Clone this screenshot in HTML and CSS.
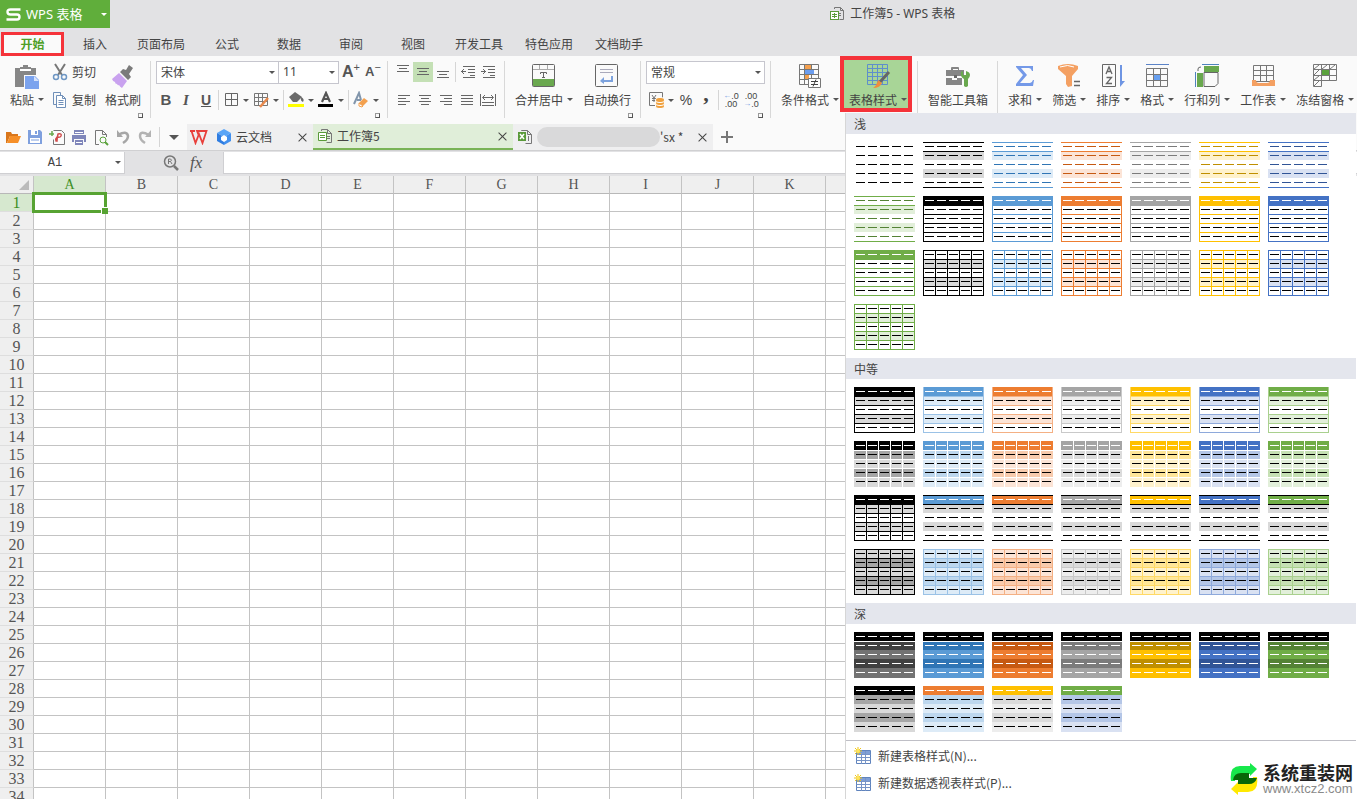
FILE: index.html
```html
<!DOCTYPE html>
<html lang="zh-CN">
<head>
<meta charset="utf-8">
<title>工作簿5 - WPS 表格</title>
<link rel="stylesheet" href="styles.css">
</head>
<body>
<header class="titlebar">
  <button class="brand" type="button">
    <svg width="15" height="13" viewBox="0 0 15 13" fill="none" stroke="#fff" stroke-width="2.4"><path d="M14.500 1.500H4.500Q1.500 1.500 1.500 4T4.500 6.500H11Q13.500 6.500 13.500 9T11 11.500H.5"/></svg>
    <span class="brand-name">WPS 表格</span><span class="brand-arrow"><i class="caret light"></i></span>
  </button>
  <h1 class="doc-title">
    <svg width="16" height="16" viewBox="0 0 16 16" fill="none" stroke="#777"><path d="M5.500 3V1.500h6l3 3v9h-4M11.500 1.500v3h3M9 7.500h3M10 9.500h2"/><rect x="1.500" y="5.500" width="8" height="8" fill="#fff" stroke="#5a9a3a"/><path d="M3 8.500h5M3 10.500h5M5.500 7v5" stroke="#5a9a3a"/></svg>
    <span>工作簿5 - WPS 表格</span>
  </h1>
</header>

<nav class="menu">
  <a href="#" class="current">开始</a><a href="#">插入</a><a href="#">页面布局</a><a href="#">公式</a><a href="#">数据</a><a href="#">审阅</a><a href="#">视图</a><a href="#">开发工具</a><a href="#">特色应用</a><a href="#">文档助手</a>
</nav>

<div class="ribbon">
  <section class="group">
    <button class="big" type="button">
      <svg width="28" height="28" viewBox="0 0 28 28"><path d="M2 5h5V4h3V2h5v2h3v1h5v7H11v12H2z" fill="#868686"/><path d="M7 6h11v2H7z" fill="#fff"/><path d="M12 13h10l4 4v9H12z" fill="#7ba3ee"/><path d="M21 13v5h5" fill="#d5e2fb"/></svg>
      <span class="label">粘贴<i class="caret"></i></span>
    </button>
    <div class="stack">
      <button class="mini" type="button"><svg width="18" height="18" viewBox="0 0 18 18" fill="none" stroke-width="2"><path d="M4 1l7 11M14 1L7 12" stroke="#777"/><circle cx="5" cy="14" r="2.500" stroke="#6f97c4" stroke-width="1.500"/><circle cx="13" cy="14" r="2.500" stroke="#6f97c4" stroke-width="1.500"/></svg>剪切</button>
      <button class="mini" type="button"><svg width="18" height="18" viewBox="0 0 18 18" fill="none" stroke="#6f8fb8"><path d="M5 13.500H2.500v-12h7V4"/><path d="M5.500 4.500h6l3 3v9h-9z" fill="#fff"/><path d="M11.500 4.500v3h3M7.500 9.500h5M7.500 11.500h5M7.500 13.500h5"/></svg>复制</button>
    </div>
    <button class="big" type="button">
      <svg width="28" height="28" viewBox="0 0 28 28"><path d="M20 2l4 3-4 6 2 3-3 3-8-8 3-3 3 1z" fill="#7b7b7b"/><path d="M10 10l8 8-5 7q-2-1-3-3-1 1-2-1-2 0-2-2-2 0-3-3z" fill="#c9a2ef"/></svg>
      <span class="label">格式刷</span>
    </button>
    <i class="launcher"></i>
  </section>

  <section class="group">
    <div class="stack font">
      <div class="line">
        <span class="combo face"><select aria-label="字体"><option>宋体</option></select></span><span class="combo size"><select aria-label="字号"><option>11</option></select></span>
        <button class="tool grow" type="button" aria-label="增大字号"><b class="big-a">A</b><sup>+</sup></button><button class="tool grow" type="button" aria-label="减小字号"><b class="small-a">A</b><sup>−</sup></button>
      </div>
      <div class="line">
        <button class="tool ltr" type="button"><b>B</b></button><button class="tool ltr" type="button"><em>I</em></button><button class="tool ltr" type="button"><u>U</u></button><i class="sep"></i>
        <button class="drop" type="button" aria-label="边框"><svg width="20" height="18" viewBox="0 0 20 18" fill="none" stroke="#666"><path d="M4.500 2.500h12v12h-12zM10.500 2.500v12M4.500 8.500h12"/></svg><i class="caret"></i></button><button class="drop" type="button" aria-label="绘制边框"><svg width="20" height="18" viewBox="0 0 20 18" fill="none" stroke="#777"><path d="M3.500 2.500h13v12h-13zM7.500 2.500v12M11.500 2.500v12M3.500 6.500h13M3.500 10.500h13"/><path d="M9 16l8-9" stroke="#e9894c" stroke-width="2.500"/></svg><i class="caret"></i></button><i class="sep"></i>
        <button class="drop" type="button" aria-label="填充颜色"><svg width="20" height="18" viewBox="0 0 20 18"><path d="M9 1l7 5-5 5H7L3 6z" fill="#6b6b6b"/><path d="M15 6q4 2 2 5-3-1-2-5" fill="#6b6b6b"/><path d="M2 13h16v3H2z" fill="#ff0"/></svg><i class="caret"></i></button><button class="drop" type="button" aria-label="字体颜色"><svg width="20" height="18" viewBox="0 0 20 18"><path d="M6 11l4-9 4 9M7.500 8h5" fill="none" stroke="#555" stroke-width="2.200"/><path d="M2 13h15v3H2z"/></svg><i class="caret"></i></button><i class="sep"></i>
        <button class="drop" type="button" aria-label="清除格式"><svg width="20" height="18" viewBox="0 0 20 18"><path d="M3 13l5-11 2 7M6 9h4" fill="none" stroke="#8195ab" stroke-width="2"/><path d="M8 12l5-5 4 3-6 6-3-1z" fill="#f3a04e"/><path d="M8 12l4 3-1 1-3-1z" fill="#fff" stroke="#f3a04e"/></svg><i class="caret"></i></button>
      </div>
    </div>
    <i class="launcher"></i>
  </section>

  <section class="group">
    <div class="stack align">
      <div class="line">
        <button class="tool" type="button" aria-label="顶端对齐"><svg width="14" height="14" viewBox="0 0 14 14"><path d="M1 .5h12M3 3.500h8M1 6.500h12"/></svg></button><button class="tool on" type="button" aria-label="垂直居中"><svg width="14" height="14" viewBox="0 0 14 14"><path d="M1 3.500h12M3 6.500h8M1 9.500h12"/></svg></button><button class="tool" type="button" aria-label="底端对齐"><svg width="14" height="14" viewBox="0 0 14 14"><path d="M1 6.500h12M3 9.500h8M1 12.500h12"/></svg></button><i class="sep"></i>
        <button class="tool" type="button" aria-label="减少缩进"><svg width="14" height="14" viewBox="0 0 14 14"><path d="M2 1.500h12M7 4.500h7M7 7.500h7M2 12.500h12M9 10.500h5M0 6.500h5M3 4L.5 6.500 3 9"/></svg></button><button class="tool" type="button" aria-label="增加缩进"><svg width="14" height="14" viewBox="0 0 14 14"><path d="M2 1.500h12M7 4.500h7M7 7.500h7M2 12.500h12M9 10.500h5M0 6.500h5M2 4l2.500 2.500L2 9"/></svg></button>
      </div>
      <div class="line wide">
        <button class="tool" type="button" aria-label="左对齐"><svg width="14" height="14" viewBox="0 0 14 14"><path d="M1 2.500h12M1 5.500h8M1 8.500h12M1 11.500h8"/></svg></button><button class="tool" type="button" aria-label="居中"><svg width="14" height="14" viewBox="0 0 14 14"><path d="M1 2.500h12M3 5.500h8M1 8.500h12M3 11.500h8"/></svg></button><button class="tool" type="button" aria-label="右对齐"><svg width="14" height="14" viewBox="0 0 14 14"><path d="M1 2.500h12M5 5.500h8M1 8.500h12M5 11.500h8"/></svg></button><button class="tool" type="button" aria-label="两端对齐"><svg width="14" height="14" viewBox="0 0 14 14"><path d="M1 2.500h12M1 5.500h12M1 8.500h12M1 11.500h12"/></svg></button><button class="tool" type="button" aria-label="分散对齐"><svg width="16" height="14" viewBox="0 0 16 14"><path d="M.5 1v12M15.500 1v12M3 4.500h10M5 2L2.500 4.500 5 7M11 2l2.500 2.500L11 7M2 9.500h12M2 12.500h12"/></svg></button>
      </div>
    </div>
  </section>

  <section class="group">
    <button class="big" type="button"><svg width="28" height="28" viewBox="0 0 28 28" fill="none" stroke="#666"><rect x="2.500" y="1.500" width="22" height="22" rx="1"/><path d="M3 16h21v7H3z" fill="#6aa84f" stroke="none"/><path d="M9.500 2v4M17.500 2v4M3 6.500h21" stroke="#aaa"/><path d="M10.500 11V9.500h6V11M13.500 9.500v5M12 14.500h3"/></svg><span class="label">合并居中<i class="caret"></i></span></button>
    <button class="big" type="button"><svg width="28" height="28" viewBox="0 0 28 28" fill="none" stroke="#666"><rect x="2.500" y="1.500" width="22" height="22" rx="1"/><path d="M7 6.500h13M7 9.500h13" stroke="#aab"/><path d="M19 13v5H9" stroke="#7ca2dd" stroke-width="2"/><path d="M11 14v7l-4-3z" fill="#7ca2dd" stroke="none"/></svg><span class="label">自动换行</span></button>
    <i class="launcher"></i>
  </section>

  <section class="group">
    <div class="stack number">
      <div class="line"><span class="combo format"><select aria-label="数字格式"><option>常规</option></select></span></div>
      <div class="line">
        <button class="drop" type="button" aria-label="会计数字格式"><svg width="20" height="18" viewBox="0 0 20 18" fill="none" stroke="#777"><path d="M9 14.500H3.500v-13h13V7"/><path d="M6 4l2 3 2-3M8 7v4M6 7.500h4M6 9.500h4"/><g fill="#f0a03c" stroke="#fff"><ellipse cx="14" cy="15" rx="4.500" ry="2.500"/><ellipse cx="14" cy="12" rx="4.500" ry="2.500"/><ellipse cx="14" cy="9" rx="4.500" ry="2.500"/></g></svg><i class="caret"></i></button><button class="tool pct" type="button">%</button><button class="tool comma" type="button">,</button><i class="sep"></i><button class="tool dec" type="button" aria-label="增加小数位"><span><b>←</b>.0</span><span>.00</span></button><button class="tool dec" type="button" aria-label="减少小数位"><span>.00</span><span><b>→</b>.0</span></button>
      </div>
    </div>
    <i class="launcher"></i>
  </section>

  <section class="group">
    <button class="big" type="button"><svg width="28" height="28" viewBox="0 0 28 28" fill="none" stroke="#777"><path d="M3.500 1.500h19v20h-19zM8.500 2v20M15.500 2v20M3.500 6.500h19M3.500 11.500h19M3.500 16.500h19"/><path d="M9 2h6v4H9zM9 12h4v4H9z" fill="#f5a04e" stroke="none"/><path d="M9 7h9v4H9z" fill="#6b9df0" stroke="none"/><path d="M12.500 15.500h12v9h-12z" fill="#fff"/><path d="M15 18.500h7M15 21.500h7M20 16.500l-3 7" stroke="#444"/></svg><span class="label">条件格式<i class="caret"></i></span></button>
    <button class="big open" type="button" aria-expanded="true"><svg width="28" height="28" viewBox="0 0 28 28" fill="none" stroke="#5e8fcb"><path d="M3.500 1.500h20v20h-20z"/><path d="M8.500 2v20M13.500 2v20M18.500 2v20M3.500 5.500h20M3.500 9.500h20M3.500 13.500h20M3.500 17.500h20"/><path d="M25 9l-9 10" stroke="#666" stroke-width="3"/><path d="M14 17l4 3q-2 5-9 5 4-3 5-8" fill="#f08c3c" stroke="none"/></svg><span class="label">表格样式<i class="caret"></i></span></button>
  </section>

  <section class="group">
    <button class="big" type="button"><svg width="28" height="28" viewBox="0 0 28 28"><path d="M2 7h5V5q0-1 1-1h6q1 0 1 1v2h5v6H2zM9 7h5V6H9zM2 15h6v2h5v-2h5v7H2z" fill="#858585"/><path d="M10 12h3v3h-3z" fill="#666"/><path d="M17 9l2-1v4h3V8q4 1 4 4 0 2-2 4v7q-2 2-4 0v-7q-4-2-3-7" fill="#69a84e"/></svg><span class="label">智能工具箱</span></button>
  </section>

  <section class="group last">
    <button class="big" type="button"><svg width="28" height="28" viewBox="0 0 28 28"><path d="M5 3h17v5h-1q-1-3-3-3H10l6 7-7 8h10q2 0 3-3h1l-1 6H5v-2l7-9-7-8z" fill="#7499e8"/></svg><span class="label">求和<i class="caret"></i></span></button>
    <button class="big" type="button"><svg width="28" height="28" viewBox="0 0 28 28"><path d="M3 3q10-4 20 0v3l-6 7v10l-4 1-2-3v-8L3 6z" fill="#f4a062"/><path d="M5 4q8-3 14 0" stroke="#fff" fill="none"/><path d="M19 18.500h6M19 22.500h6" stroke="#666" stroke-width="1.500"/></svg><span class="label">筛选<i class="caret"></i></span></button>
    <button class="big" type="button"><svg width="28" height="28" viewBox="0 0 28 28" fill="none" stroke="#666"><path d="M3.500 1.500h13v22h-13z"/><path d="M7 11l3-7 3 7M8 8.500h4M7.500 14.500h5l-5 6h5.500" stroke-width="1.300"/><path d="M22 2v19" stroke="#6e95e3" stroke-width="2"/><path d="M21 24v-6h5z" fill="#6e95e3" stroke="none"/></svg><span class="label">排序<i class="caret"></i></span></button>
    <button class="big" type="button"><svg width="28" height="28" viewBox="0 0 28 28" fill="none" stroke="#777"><path d="M3 1.500h23" stroke="#5b83c7"/><path d="M3.500 5.500h21v18h-21zM10.500 6v18M17.500 6v18M3.500 11.500h21M3.500 17.500h21"/><path d="M11 12h6v5h-6z" fill="#68a0f0" stroke="none"/></svg><span class="label">格式<i class="caret"></i></span></button>
    <button class="big" type="button"><svg width="28" height="28" viewBox="0 0 28 28" fill="none" stroke="#666"><path d="M11 9.500h14v11l-3 3H11zM5 8V6q0-2 3-2"/><path d="M11 3h15v6H11zM4 10h6v14H4z" fill="#69a84e" stroke="none"/><path d="M9 1.500h17M2.500 9v15" stroke="#4f83bd"/></svg><span class="label">行和列<i class="caret"></i></span></button>
    <button class="big" type="button"><svg width="28" height="28" viewBox="0 0 28 28" fill="none" stroke="#777"><path d="M4.500 2.500h20v16h-20zM11.500 3v16M17.500 3v16M4.500 7.500h20M4.500 12.500h20"/><path d="M3 17h4q0 3 3 3h8q3 0 3-3h5v6H3z" fill="#f4a062" stroke="none"/></svg><span class="label">工作表<i class="caret"></i></span></button>
    <button class="big" type="button"><svg width="28" height="28" viewBox="0 0 28 28" fill="none" stroke="#777"><path d="M2.500 1.500h23v16h-15v6h-8zM10.500 2v16M18.500 2v16M2.500 6.500h23M2.500 12.500h23M2.500 17.500h8M3 6l5-4M11 6l5-4M19 6l5-4M3 12l5-5M3 17l5-4M3 23l5-5"/><path d="M11 7h7v5h-7z" fill="#5ba23d" stroke="none"/></svg><span class="label">冻结窗格<i class="caret"></i></span></button>
  </section>
</div>

<div class="docbar">
  <div class="quick">
    <button type="button" aria-label="打开"><svg width="18" height="18" viewBox="0 0 18 18"><path d="M2 4h5l1 2h6v2H6l-3 7H2z" fill="#d9761b"/><path d="M6 8h11l-3 7H3z" fill="#f68f28"/></svg></button>
    <button type="button" aria-label="保存"><svg width="18" height="18" viewBox="0 0 18 18"><path d="M2 2h12l2 2v12H2z" fill="#7fa0de"/><path d="M5 2h7v5H5zM4 10h10v5H4z" fill="#fff"/><path d="M9 3h2v3H9zM5 11.500h8v1H5z" fill="#7fa0de"/></svg></button>
    <button type="button" aria-label="输出为PDF"><svg width="18" height="18" viewBox="0 0 18 18" fill="none" stroke="#777"><path d="M5.500 2.500h8l3 3v11h-11v-5"/><path d="M1 6h5M4 3v5" stroke="#68a84e" stroke-width="1.500"/><path d="M9 13q0-3 1-7 4-1 3 2-1 2-4 1-2 2-1 4z" stroke="#d14a4a" stroke-width="1.500"/></svg></button>
    <button type="button" aria-label="打印"><svg width="18" height="18" viewBox="0 0 18 18"><path d="M4 2h10v4H4zM2 7h14v7h-2v-3H4v3H2zM5 12h8v5H5z" fill="#7f86ba"/><path d="M5 4h8v1H5zM6 14h6v1H6z" fill="#fff"/></svg></button>
    <button type="button" aria-label="打印预览"><svg width="18" height="18" viewBox="0 0 18 18" fill="none" stroke="#777"><path d="M7 16.500H3.500v-14h7l4 4V9M10.500 2.500v4h4"/><circle cx="11" cy="12" r="3" stroke="#5ba23d"/><path d="M13 14l3 3" stroke="#5ba23d" stroke-width="2"/></svg></button>
    <button type="button" aria-label="撤销"><svg width="18" height="18" viewBox="0 0 18 18" fill="none" stroke="#a6a6a6" stroke-width="2.500"><path d="M4 7q9-5 10 1 0 4-5 7"/><path d="M3 2v7h6z" fill="#a6a6a6" stroke="none"/></svg></button>
    <button type="button" aria-label="恢复"><svg width="18" height="18" viewBox="0 0 18 18" fill="none" stroke="#b3b3b3" stroke-width="2.500"><path d="M13 7Q4 2 4 8q0 4 5 7"/><path d="M15 2v7H9z" fill="#b3b3b3" stroke="none"/></svg></button>
    <i class="sep"></i>
    <button type="button" aria-label="自定义"><i class="caret large"></i></button>
  </div>
  <div class="tab home">
    <svg width="18" height="16" viewBox="0 0 18 16" fill="none" stroke="#e8403c" stroke-width="1.800"><path d="M0 2h5M1.500 2l4 12L9 5l3.500 9 4-12H7l2 5"/></svg>
    <svg width="16" height="16" viewBox="0 0 16 16"><path d="M8 0l7 4-7 4-7-4z" fill="#5aa5f7"/><path d="M1 4l7 4v8l-7-4z" fill="#2f7de1"/><path d="M15 4L8 8v8l7-4z" fill="#4290ee"/><path d="M8 6l3 2v3l-3 2-3-2V8z" fill="#fff"/></svg>
    <a href="#">云文档</a><button class="close" type="button" aria-label="关闭"></button>
  </div>
  <div class="tab active">
    <svg width="16" height="16" viewBox="0 0 16 16" fill="none" stroke="#777"><path d="M4.500 3V1.500h6l4 4v9h-5M10.500 1.500v4h4M10 8.500h3M10 10.500h3"/><path d="M1.500 4.500h8v8h-8z" fill="#fff" stroke="#5a9a3a"/><path d="M3 7.500h5M3 9.500h5" stroke="#5a9a3a"/></svg>
    <a href="#">工作簿5</a><button class="close" type="button" aria-label="关闭"></button>
  </div>
  <div class="tab">
    <svg width="16" height="16" viewBox="0 0 16 16" fill="none" stroke="#777"><path d="M4.500 2V1.500h6l4 4v9h-6M10.500 1.500v4h4M11.500 7v5"/><path d="M1 3h8v9H1z" fill="#5a9a3a" stroke="none"/><path d="M3 5l4 5M7 5l-4 5" stroke="#fff" stroke-width="1.500"/></svg>
    <span class="masked"></span><a href="#">'sx *</a><button class="close" type="button" aria-label="关闭"></button>
  </div>
  <button class="new-tab" type="button" aria-label="新建"></button>
</div>

<div class="formula">
  <label class="namebox"><input type="text" value="A1" aria-label="名称框"><i class="caret"></i></label>
  <div class="fx"><svg width="18" height="18" viewBox="0 0 18 18" fill="none" stroke="#777" stroke-width="1.500"><circle cx="8" cy="7.500" r="5.500"/><path d="M12 12l4 4" stroke-width="2.500"/><path d="M6.500 10V5h2q2 1 0 2.500h-2M8.500 7.500L10 10" stroke-width="1"/></svg><button type="button">fx</button></div>
  <input class="expr" type="text" aria-label="编辑栏">
</div>

<main class="workspace"><table class="sheet" id="sheet"></table></main>

<aside class="gallery">
  <h2>浅</h2><div class="thumbs" id="light"></div>
  <h2>中等</h2><div class="thumbs" id="medium"></div>
  <h2>深</h2><div class="thumbs" id="dark"></div>
  <div class="actions">
    <button type="button"><svg width="18" height="18" viewBox="0 0 18 18"><use href="#new-table"/></svg>新建表格样式(N)...</button>
    <button type="button"><svg width="18" height="18" viewBox="0 0 18 18"><g id="new-table"><path d="M2.500 3.500h14v13h-14z" fill="#fff" stroke="#5f83bd"/><path d="M3 4h13v3H3z" fill="#7f9fd6"/><path d="M2.500 7.500h14M2.500 10.500h14M2.500 13.500h14M7.500 7v10M11.500 4v13" stroke="#7794c6"/><path d="M4 0v8M0 4h8M1 1l6 6M7 1L1 7" stroke="#efc51d"/><circle cx="4" cy="4" r="2" fill="#ffe55a"/></g></svg>新建数据透视表样式(P)...</button>
  </div>
</aside>

<div class="credit">
  <svg width="28" height="32" viewBox="0 0 28 32"><path d="M1 18Q-1 3 10 3h10V0l7 6-7 7v-2H11q-6 0-6 7z" fill="#18e84c"/><path d="M27 14q2 15-9 15H8v3l-7-6 7-7v2h9q6 0 6-7z" fill="#ffe900"/><path d="M3 17q1-7 8-7h8v5h8q-2 6-8 6H8v-4z" fill="#086808"/></svg>
  <p><strong>系统重装网</strong><span>www.xtcz2.com</span></p>
</div>
<script src="app.js"></script>
</body>
</html>
```
FILE: styles.css
```css
* { box-sizing: border-box; }
body {
  margin: 0; height: 100vh; overflow: hidden; position: relative;
  display: flex; flex-direction: column;
  background: #fff; color: #444;
  font: 12px/18px "Noto Sans CJK SC", sans-serif;
}
button, input, select { font: inherit; color: inherit; border: 0; padding: 0; margin: 0; background: none; }
a { color: inherit; text-decoration: none; }
svg { flex: none; display: block; }
h1, h2, p { margin: 0; font-size: 12px; font-weight: 400; }

.caret { display: inline-block; flex: none; border: 3px solid transparent; border-top-color: #555; border-bottom: 0; }
.caret.light { border-top-color: #fff; }
.caret.large { border-width: 5px 5px 0; }
.sep { width: 1px; height: 20px; background: #d5d5d5; margin: 0 2px; flex: none; }

.titlebar { display: flex; flex: none; height: 28px; background: #e2e2e4; font-family: "Noto Sans", "Noto Sans CJK SC", sans-serif; }
.brand { display: flex; align-items: center; width: 110px; height: 28px; padding-left: 6px; gap: 5px; background: #60ae3b; color: #fff; }
.brand-name { flex: 1; text-align: left; font-size: 13px; white-space: nowrap; }
.brand-arrow { width: 13px; display: flex; justify-content: center; }
.doc-title { display: flex; align-items: center; gap: 5px; margin-left: 53%; color: #444; }

.menu { display: flex; flex: none; height: 28px; background: #e2e2e4; padding-left: 1px; }
.menu a { min-width: 62px; padding: 7px 11px 0; text-align: center; }
.menu .current { min-width: 63px; border: 3px solid #f5333a; margin: 4px 0 0; padding-top: 0; height: 24px; color: #4f9f27; font-weight: 700; background: #fafafa; }

.ribbon { display: flex; flex: none; height: 68px; background: #fafafa; overflow: hidden; }
.group { position: relative; display: flex; flex: none; align-items: flex-start; padding: 4px 5px 0; }
.group::after { content: ""; position: absolute; right: 0; top: 5px; bottom: 6px; width: 1px; background: #d8d8d8; }
.group.last::after { display: none; }
.big { display: flex; flex-direction: column; align-items: center; padding: 3px 5px 0; height: 48px; }
.label { display: flex; align-items: center; line-height: 17px; white-space: nowrap; }
.label .caret { margin-left: 4px; }
.big.open { position: relative; background: #a8d597; margin-right: 1px; }
.big.open::after { content: ""; position: absolute; inset: -4px 0 -4px -4px; border: 4px solid #f5333a; }
.stack { display: flex; flex-direction: column; gap: 6px; padding-top: 1px; }
.mini { display: flex; align-items: center; gap: 3px; width: 51px; height: 22px; padding-left: 2px; }
.line { display: flex; align-items: center; height: 22px; }
.font { width: 227px; }
.align { width: 107px; }
.number { width: 120px; }
.launcher { position: absolute; right: 8px; bottom: 6px; width: 5px; height: 5px; border: 1px solid #999; border-right-color: #555; border-bottom-color: #555; }

.combo { position: relative; display: block; height: 23px; }
.combo::after { content: ""; position: absolute; right: 4px; top: 10px; border: 3px solid transparent; border-top-color: #555; border-bottom: 0; }
.combo select { appearance: none; width: 100%; height: 23px; padding-left: 4px; border: 1px solid #c6c6ce; background: #fff; border-radius: 0; }
.face { width: 123px; }
.size { width: 60px; }
.size select { border-left: 0; font-family: "Noto Sans", sans-serif; }
.format { width: 119px; }

.tool { display: flex; align-items: center; justify-content: center; width: 20px; height: 20px; flex: none; }
.tool svg { fill: none; stroke: #666; }
.wide .tool { width: 21px; }
.tool.on { background: #c4e0b5; }
.grow { position: relative; margin-left: 2px; color: #555; font-family: "Liberation Sans", sans-serif; }
.grow sup { align-self: flex-start; font-size: 11px; line-height: 10px; }
.big-a { font-size: 16px; }
.small-a { font-size: 13px; }
.ltr { font: 15px/20px "Liberation Sans", sans-serif; color: #555; }
.ltr em { font-family: "Liberation Serif", serif; font-weight: 700; }
.ltr u { font-weight: 700; font-size: 14px; }
.drop { display: flex; align-items: center; width: 30px; height: 20px; gap: 2px; flex: none; }
.pct { font: 14px/20px "Liberation Sans", sans-serif; }
.comma { font: bold 22px/8px "Liberation Serif", serif; align-items: flex-start; }
.dec { flex-direction: column; font: 9px/8px "Liberation Sans", sans-serif; }
.dec span { display: flex; }
.dec b { color: #6f97e0; font-size: 8px; font-weight: 400; }

.docbar { display: flex; flex: none; height: 27px; background: #fafafa; border-bottom: 1px solid #d0d0d2; }
.quick { display: flex; align-items: center; width: 187px; padding-left: 2px; }
.quick button { width: 22px; display: flex; justify-content: center; }
.quick .sep { margin: 0 3px; }
.tab { display: flex; align-items: center; width: 200px; gap: 4px; padding: 0 6px 0 4px; background: #efeff0; }
.tab.home { width: 126px; gap: 8px; padding-left: 3px; }
.tab.home a { margin-left: -4px; }
.tab.active { background: #e0eed9; border-bottom: 2px solid #79b356; }
.close, .new-tab { position: relative; width: 9px; height: 9px; margin-left: auto; flex: none; }
.close::before, .close::after, .new-tab::before, .new-tab::after { content: ""; position: absolute; left: -1px; top: 4px; width: 11px; height: 1px; background: #444; transform: rotate(45deg); }
.close::after { transform: rotate(-45deg); }
.new-tab { width: 12px; height: 12px; margin: 7px 0 0 8px; }
.new-tab::before, .new-tab::after { left: 0; top: 5px; width: 12px; height: 2px; background: #777; transform: none; }
.new-tab::after { transform: rotate(90deg); }
.masked { width: 123px; height: 20px; border-radius: 10px; background: #d9d9da; }
.masked + a { margin-left: -4px; white-space: nowrap; }

.formula { display: flex; flex: none; height: 25px; padding: 1px 0 2px; background: #e2e2e4; }
.namebox { position: relative; display: block; width: 125px; background: #fff; border: solid #cfcfd2; border-width: 0 1px 1px 0; }
.namebox input { width: 110px; height: 21px; text-align: center; font: 12px/21px "Liberation Mono", monospace; }
.namebox .caret { position: absolute; right: 3px; top: 9px; }
.fx { display: flex; align-items: center; width: 98px; gap: 10px; padding-left: 37px; }
.fx button { font: italic 17px/18px "Liberation Serif", serif; color: #555; }
.expr { flex: 1; background: #fff; border: solid #cfcfd2; border-width: 0 0 1px 1px; }

.workspace { flex: 1; overflow: hidden; min-height: 0; }
.sheet { table-layout: fixed; border-collapse: separate; border-spacing: 0; width: max-content; }
.sheet .row-col { width: 34px; }
.sheet .data-col { width: 72px; }
.sheet th, .sheet td { height: 18px; padding: 0; border: solid #c3c3c3; border-width: 0 1px 1px 0; }
.sheet th { background: #efefef; font: 14px/17px "Liberation Serif", serif; color: #555; }
.sheet tbody th { font-size: 16px; border-bottom-color: #dedede; }
.sheet thead th { border-bottom-color: #b8b8b8; }
.sheet .hot { background: #d6e8cf; color: #3d8f1f; }
.corner { position: relative; }
.corner::after { content: ""; position: absolute; right: 4px; bottom: 3px; border: 5px solid #bbb; border-top-color: transparent; border-left-color: transparent; }
.sheet .cursor { position: relative; }
.cursor::before { content: ""; position: absolute; inset: -2px; border: 3px solid #57a332; }
.cursor::after { content: ""; position: absolute; right: -3px; bottom: -3px; width: 6px; height: 6px; background: #57a332; border: solid #fff; border-width: 1px 0 0 1px; }

.gallery { position: absolute; top: 113px; right: 1px; bottom: 0; width: 511px; background: #fff; border-left: 1px solid #d6d6d6; overflow: hidden; }
.gallery h2 { height: 21px; line-height: 21px; padding-left: 8px; background: #e4e6ed; color: #444; }
.thumbs { display: grid; grid-template-columns: repeat(7, 61px); gap: 8px; padding: 8px; }
.thumbs button { height: 46px; }
.actions { border-top: 1px solid #bfbfc6; padding-top: 1px; }
.actions button { display: flex; align-items: center; gap: 6px; width: max-content; height: 27px; padding-left: 8px; text-align: left; }

.credit { position: absolute; right: 4px; bottom: 4px; display: flex; align-items: center; gap: 5px; }
.credit p { display: flex; flex-direction: column; }
.credit strong { font-size: 18px; line-height: 20px; font-weight: 700; color: #222; }
.credit span { font: 13px/13px "Liberation Sans", sans-serif; color: #8a8a8a; }
```
FILE: app.js
```javascript
const palette = {
  black:  { main: '#000000', light: '#d9d9d9', mid: '#a6a6a6', line: '#000000', dark: '#000000' },
  blue:   { main: '#5b9bd5', light: '#ddebf7', mid: '#bdd7ee', line: '#9bc2e6', dark: '#2f75b5' },
  orange: { main: '#ed7d31', light: '#fce4d6', mid: '#f8cbad', line: '#f4b084', dark: '#c65911' },
  gray:   { main: '#a5a5a5', light: '#ededed', mid: '#dbdbdb', line: '#c9c9c9', dark: '#7b7b7b' },
  gold:   { main: '#ffc000', light: '#fff2cc', mid: '#ffe699', line: '#ffd966', dark: '#bf8f00' },
  navy:   { main: '#4472c4', light: '#d9e1f2', mid: '#b4c6e7', line: '#8ea9db', dark: '#305496' },
  green:  { main: '#70ad47', light: '#e2efda', mid: '#c6e0b4', line: '#a9d08e', dark: '#548235' }
};
const ALL = [0, 9, 18, 27, 36, 45];
const rect = (x, y, w, h, fill) => `<rect x="${x}" y="${y}" width="${w}" height="${h}" fill="${fill}"/>`;

function drawThumb(s) {
  let out = '';
  s.rows.forEach((fill, i) => { if (fill) out += rect(0, i * 9, 61, i === 4 ? 10 : 9, fill); });
  (s.h || []).forEach(y => { out += rect(0, y, 61, 1, s.color); });
  (s.v || []).forEach(x => { out += rect(x, 0, 1, 46, s.color); });
  for (let r = 0; r < 5; r++) {
    for (let c = 0; c < 5; c++) {
      out += rect(2 + c * 12, r * 9 + 4, 9, 1, r === 0 && s.head ? s.head : s.dash || '#000');
    }
  }
  return `<button type="button"><svg width="61" height="46" viewBox="0 0 61 46" shape-rendering="crispEdges">${out}</svg></button>`;
}

const styles = {
  plain: () => ({ rows: ['', '', '', '', ''] }),
  ruled: p => ({ rows: ['', p.light, '', p.light, ''], h: [0, 9, 45], color: p.main, dash: p.dark }),
  boxed: p => ({ rows: [p.main, '', '', '', ''], h: ALL, v: [0, 60], color: p.main, head: '#fff' }),
  grid: p => ({ rows: ['', p.light, '', p.light, ''], h: ALL, v: [0, 12, 24, 36, 48, 60], color: p.main }),
  banded: p => ({ rows: [p.main, p.light, '', p.light, ''], h: [9, 18, 27, 36, 45], v: [0, 60], color: p.line, head: '#fff' }),
  tiles: p => ({ rows: [p.main, p.mid, p.light, p.mid, p.light], h: [9, 18, 27, 36], v: [12, 24, 36, 48], color: '#fff', head: '#fff' }),
  formal: p => p === palette.black
    ? { rows: ['#000', p.light, '', p.light, ''], h: ALL, v: [0, 12, 24, 36, 48, 60], color: '#000', head: '#fff' }
    : { rows: [p.main, '#d9d9d9', '', '#d9d9d9', ''], h: [0, 9, 45], color: '#000', head: '#fff' },
  shaded: p => ({ rows: [p.light, p.mid, p.light, p.mid, p.light], h: ALL, v: [0, 12, 24, 36, 48, 60], color: p.line }),
  deep: p => {
    const dark = p === palette.black ? '#404040' : p.dark;
    const main = p === palette.black ? '#737373' : p.main;
    return { rows: ['#000', dark, main, dark, main], h: [9], color: '#fff', head: '#fff', dash: '#fff' };
  },
  mixed: (p, head) => ({ rows: [head.main, p.mid, p.light, p.mid, p.light], head: '#fff' })
};

const { black, blue, orange, gray, gold, navy, green } = palette;
const tones = Object.values(palette);
const fill = (id, list) => { document.getElementById(id).innerHTML = list.map(drawThumb).join(''); };

fill('light', [
  styles.plain(), ...[black, blue, orange, gray, gold, navy, green].map(styles.ruled),
  ...tones.map(styles.boxed), ...tones.map(styles.grid)
]);
fill('medium', ['banded', 'tiles', 'formal', 'shaded'].flatMap(k => tones.map(p => styles[k](p))));
fill('dark', [
  ...tones.map(styles.deep),
  styles.mixed(black, black), styles.mixed(blue, orange), styles.mixed(gray, gold), styles.mixed(navy, green)
]);

const letters = [...'ABCDEFGHIJKLMNOPQR'];
let html = '<colgroup><col class="row-col">' + letters.map(() => '<col class="data-col">').join('') + '</colgroup>';
html += '<thead><tr><th class="corner"></th>' + letters.map((l, i) => `<th scope="col"${i ? '' : ' class="hot"'}>${l}</th>`).join('') + '</tr></thead><tbody>';
for (let r = 1; r <= 34; r++) {
  html += `<tr><th scope="row"${r === 1 ? ' class="hot"' : ''}>${r}</th>` + letters.map((l, i) => `<td${r === 1 && i === 0 ? ' class="cursor"' : ''}></td>`).join('') + '</tr>';
}
document.getElementById('sheet').innerHTML = html + '</tbody>';
```
